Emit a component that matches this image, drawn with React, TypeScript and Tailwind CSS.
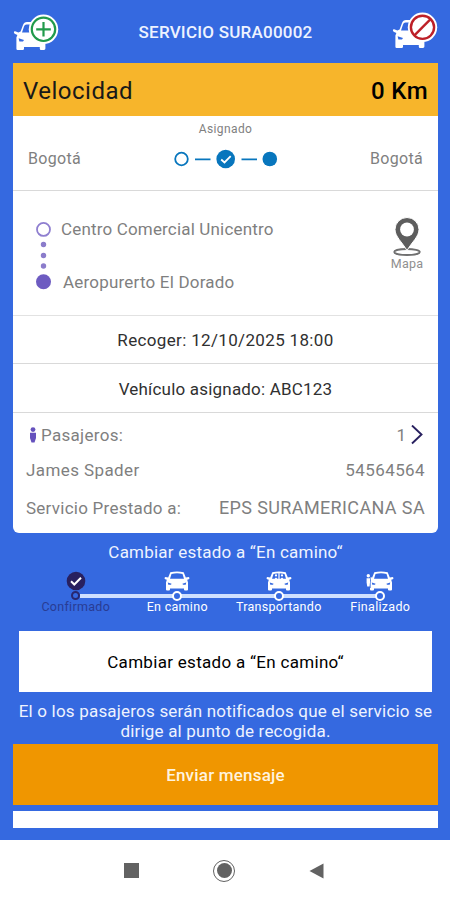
import type { ReactNode } from 'react';

const steps = [
  { label: 'Confirmado', kind: 'done' },
  { label: 'En camino', kind: 'car' },
  { label: 'Transportando', kind: 'ride' },
  { label: 'Finalizado', kind: 'end' },
];

function ServiceCar({ children }: { children: ReactNode }) {
  return (
    <svg width="46" height="40" viewBox="0 0 46 40">
      {/* car body, partly hidden by the badge */}
      <path
        d="M7.6 19.6 10 13Q11 10 14 10H24V24H32.4V36.6Q32.4 38 31 38H28Q26.8 38 26.8 36.7V35H11V36.7Q11 38 9.7 38H4.6Q3.4 38 3.4 36.7V25.5L4.4 22.9 1.6 21.8Q-.1 19 2.2 19.2L5.4 20.4Z"
        fill="#fff"
      />
      <path d="M9 20.6 11 14.5Q11.5 12.5 13.5 12.5H20V20.6Z" fill="#3569e0" />
      <path d="M5.6 26.2 11 28 10 29.6H6.4Z" fill="#3569e0" />
      <circle cx="30.5" cy="17.3" r="14.7" fill="#fff" />
      {children}
    </svg>
  );
}

function FrontCar({ kind }: { kind: string }) {
  return (
    <svg width="30" height="20" viewBox="0 0 30 20" className={kind === 'end' ? 'relative left-px' : ''}>
      <path
        d="M8.3 1.2Q15 -.4 21.7 1.2L23.8 6.4 26.6 5.9Q28.2 7 26.8 8.3L25.2 8.8 26 11.5V18.4Q26 19.5 25 19.5H23Q22 19.5 22 18.4V17.6H8V18.4Q8 19.5 7 19.5H5Q4 19.5 4 18.4V11.5L4.8 8.8 3.2 8.3Q1.8 7 3.4 5.9L6.2 6.4Z"
        fill="#fff"
      />
      <path d="M9.5 2.9Q15 1.8 20.5 2.9L22 7.7H8Z" fill="#3569e0" />
      <path d="M5.8 11.6 9.6 12.7 9 13.8H6.3ZM24.2 11.6 20.4 12.7 21 13.8H23.7Z" fill="#3569e0" />
      {kind === 'ride' && (
        <g fill="#fff">
          <circle cx="12" cy="4.4" r="1.1" />
          <circle cx="18" cy="4.4" r="1.1" />
          <path d="M10.6 8Q12 5 13.4 8ZM16.6 8Q18 5 19.4 8ZM14.4 2H15.6V8H14.4Z" />
        </g>
      )}
      {kind === 'end' && (
        <g>
          <path d="M0 3H4.6V17H0Z" fill="#3569e0" />
          <circle cx="2.3" cy="4.8" r="1.7" fill="#fff" />
          <path d="M.6 7.2H4V11.2L3.6 15.5H1.2L.6 11.2Z" fill="#fff" />
        </g>
      )}
    </svg>
  );
}

function DoneCheck() {
  return (
    <svg width="20" height="20" viewBox="0 0 20 20">
      <circle cx="10" cy="10" r="9.3" fill="#28205f" />
      <path d="m5 10.2 3.3 3.3L15 6.8" fill="none" stroke="#fff" strokeWidth="2" />
    </svg>
  );
}

export default function App() {
  return (
    <div className="flex h-[900px] w-[450px] flex-col overflow-hidden bg-white font-['Roboto',sans-serif] text-[17px] text-[#7f7f7f]">
      <div className="h-[840px] bg-[#3569e0] px-3 pl-[13px]">
        <header className="flex h-[63px] items-start justify-between pt-3">
          <ServiceCar>
            <circle cx="30.5" cy="17.3" r="11.7" fill="#fff" stroke="#219a4b" strokeWidth="2.2" />
            <path d="M30.5 10V24.6M23.2 17.3H37.8" stroke="#219a4b" strokeWidth="2.2" />
          </ServiceCar>
          <h1 className="pt-[8px] text-[17px] leading-[24px] font-medium tracking-[0.23px] text-[#eef3ff]">
            SERVICIO SURA00002
          </h1>
          <div className="-mt-[2px]">
            <ServiceCar>
              <circle cx="30.5" cy="17.3" r="11.6" fill="#fff" stroke="#bd2028" strokeWidth="2.4" />
              <path d="M38.6 9.2 22.4 25.4" stroke="#bd2028" strokeWidth="2.4" />
            </ServiceCar>
          </div>
        </header>

        <main className="h-[470px] overflow-hidden rounded-b-md bg-white">
          <div className="flex h-[53px] items-center justify-between bg-[#f7b52b] px-[10px] pt-[3px] text-2xl text-[#191919]">
            <span className="tracking-[0.5px]">Velocidad</span>
            <span className="font-medium tracking-[0.4px] text-black">0 Km</span>
          </div>

          <section className="flex h-[75px] items-start justify-between border-b border-[#d9d9d9] px-[15px]">
            <span className="pt-[32px] text-base leading-[22px] tracking-[0.3px]">Bogotá</span>
            <div className="flex flex-col items-center pt-[5px]">
              <span className="text-[12px] leading-4 tracking-[0.4px]">Asignado</span>
              <svg width="106" height="22" viewBox="0 0 106 22" className="mt-[11px]">
                <circle cx="8.5" cy="11" r="6.3" fill="none" stroke="#0876bd" strokeWidth="1.8" />
                <path d="M22 11.3H37.5M68.5 11.3H84" stroke="#0876bd" strokeWidth="1.8" />
                <circle cx="52.7" cy="11" r="9.3" fill="#0876bd" />
                <path d="m48.2 11.5 3.3 3 6.2-6.3" fill="none" stroke="#fff" strokeWidth="1.8" />
                <circle cx="96.8" cy="11" r="7.3" fill="#0876bd" />
              </svg>
            </div>
            <span className="pt-[32px] text-base leading-[22px] tracking-[0.3px]">Bogotá</span>
          </section>

          <section className="flex h-[125px] border-b border-[#e2e2e2] pr-[12px] pl-[22px]">
            <svg width="18" height="74" viewBox="0 0 18 74" className="mt-[30px]">
              <circle cx="8.5" cy="8.4" r="6.5" fill="none" stroke="#8f7fd0" strokeWidth="1.8" />
              <g fill="#8b7ccb">
                <circle cx="8.5" cy="23.5" r="2.7" />
                <circle cx="8.5" cy="34.5" r="2.7" />
                <circle cx="8.5" cy="45" r="2.7" />
              </g>
              <circle cx="8.5" cy="60.8" r="7.5" fill="#6d5bc1" />
            </svg>
            <div className="flex-1 pt-[28px] pl-2">
              <p className="leading-[20px] tracking-[0.17px]">Centro Comercial Unicentro</p>
              <p className="mt-[33px] pl-[2px] leading-[20px] tracking-[0.2px]">Aeropurerto El Dorado</p>
            </div>
            <div className="flex w-[38px] flex-col items-center pt-[26px]">
              <svg width="30" height="40" viewBox="0 0 30 40">
                <ellipse cx="15" cy="35" rx="12.8" ry="3" fill="none" stroke="#707070" strokeWidth="1.8" />
                <path
                  d="M15 .5A12 12 0 0 1 27 12.5C27 19.5 20 25 15 33.5 10 25 3 19.5 3 12.5A12 12 0 0 1 15 .5Z"
                  fill="#5d5d5d"
                  stroke="#fff"
                  strokeWidth="1"
                />
                <circle cx="15" cy="12.5" r="6.9" fill="#fff" />
              </svg>
              <span className="-mt-px text-[12.5px] leading-4 tracking-[0.2px] text-[#8f8f8f]">Mapa</span>
            </div>
          </section>

          <p className="h-[48px] border-b border-[#d9d9d9] text-center leading-[48px] tracking-[0.34px] text-[#303030]">
            Recoger: 12/10/2025 18:00
          </p>
          <p className="h-[49px] border-b border-[#d9d9d9] pt-px text-center leading-[48px] tracking-[0.2px] text-[#303030]">
            Vehículo asignado: ABC123
          </p>

          <section className="px-[13px] pt-[11px] leading-[22px]">
            <div className="flex items-center">
              <svg width="8" height="16" viewBox="0 0 8 16" className="ml-[3px]">
                <circle cx="4" cy="2.6" r="2.4" fill="#6551bd" />
                <path d="M1 5.8H7V11L5.5 15.5H2.5L1 11Z" fill="#6551bd" />
              </svg>
              <span className="ml-[4px] tracking-[0.3px]">Pasajeros:</span>
              <span className="ml-auto">1</span>
              <svg width="14" height="20" viewBox="0 0 14 20" className="mr-px ml-[4px]">
                <path d="m2 .5 9.5 9L2 18.5" fill="none" stroke="#28205f" strokeWidth="1.9" />
              </svg>
            </div>
            <div className="mt-[13px] flex justify-between tracking-[0.4px]">
              <span>James Spader</span>
              <span>54564564</span>
            </div>
            <div className="mt-4 flex justify-between">
              <span className="tracking-[0.25px]">Servicio Prestado a:</span>
              <span className="text-[18px] tracking-[0.37px]">EPS SURAMERICANA SA</span>
            </div>
          </section>
        </main>

        <p className="pt-[8px] text-center leading-[22px] tracking-[0.22px] text-[#eef3ff]">
          Cambiar estado a “En camino“
        </p>

        <div className="relative mt-[7px] ml-[12px] grid w-[406px] grid-cols-4">
          <div className="absolute top-[24px] right-[51px] left-[55px] h-[4px] bg-[#cfe0ff]" />
          {steps.map((step) => (
            <div key={step.label} className="relative flex flex-col items-center">
              <div className="flex h-[21px] items-center">
                {step.kind === 'done' ? <DoneCheck /> : <FrontCar kind={step.kind} />}
              </div>
              {step.kind === 'done' ? (
                <span className="size-[9px] rounded-full border-2 border-[#28276f] bg-[#3569e0]" />
              ) : (
                <span className="size-[10px] rounded-full border-[2.5px] border-white bg-[#3569e0]" />
              )}
              <span
                className={`absolute top-[29px] text-[12.5px] leading-4 tracking-[0.3px] whitespace-nowrap ${
                  step.kind === 'done' ? 'text-[#293c93]' : 'text-white'
                }`}
              >
                {step.label}
              </span>
            </div>
          ))}
        </div>

        <button className="mx-[6px] mt-[30px] block h-[61px] w-[413px] bg-white pt-[2px] tracking-[0.3px] text-black">
          Cambiar estado a “En camino“
        </button>
        <p className="pt-[9px] text-center leading-[20px] tracking-[0.2px] whitespace-nowrap text-[#eef3ff]">
          El o los pasajeros serán notificados que el servicio se
          <br />
          dirige al punto de recogida.
        </p>
        <button className="mt-[3px] block h-[61px] w-full bg-[#f09600] pt-[2px] font-medium tracking-[0.2px] text-[#fff3df]">
          Enviar mensaje
        </button>
        <div className="mt-[6px] h-[17px] bg-white" />
      </div>

      <nav className="flex h-[60px] items-center justify-between pt-px pr-[126px] pl-[124px]">
        <div className="size-[15px] bg-[#626262]" />
        <div className="flex size-[22px] items-center justify-center rounded-full border-[1.5px] border-[#626262]">
          <div className="size-[15px] rounded-full bg-[#626262]" />
        </div>
        <svg width="15" height="16" viewBox="0 0 15 16">
          <path d="M.5 8 14.5.5V15.5Z" fill="#626262" />
        </svg>
      </nav>
    </div>
  );
}
